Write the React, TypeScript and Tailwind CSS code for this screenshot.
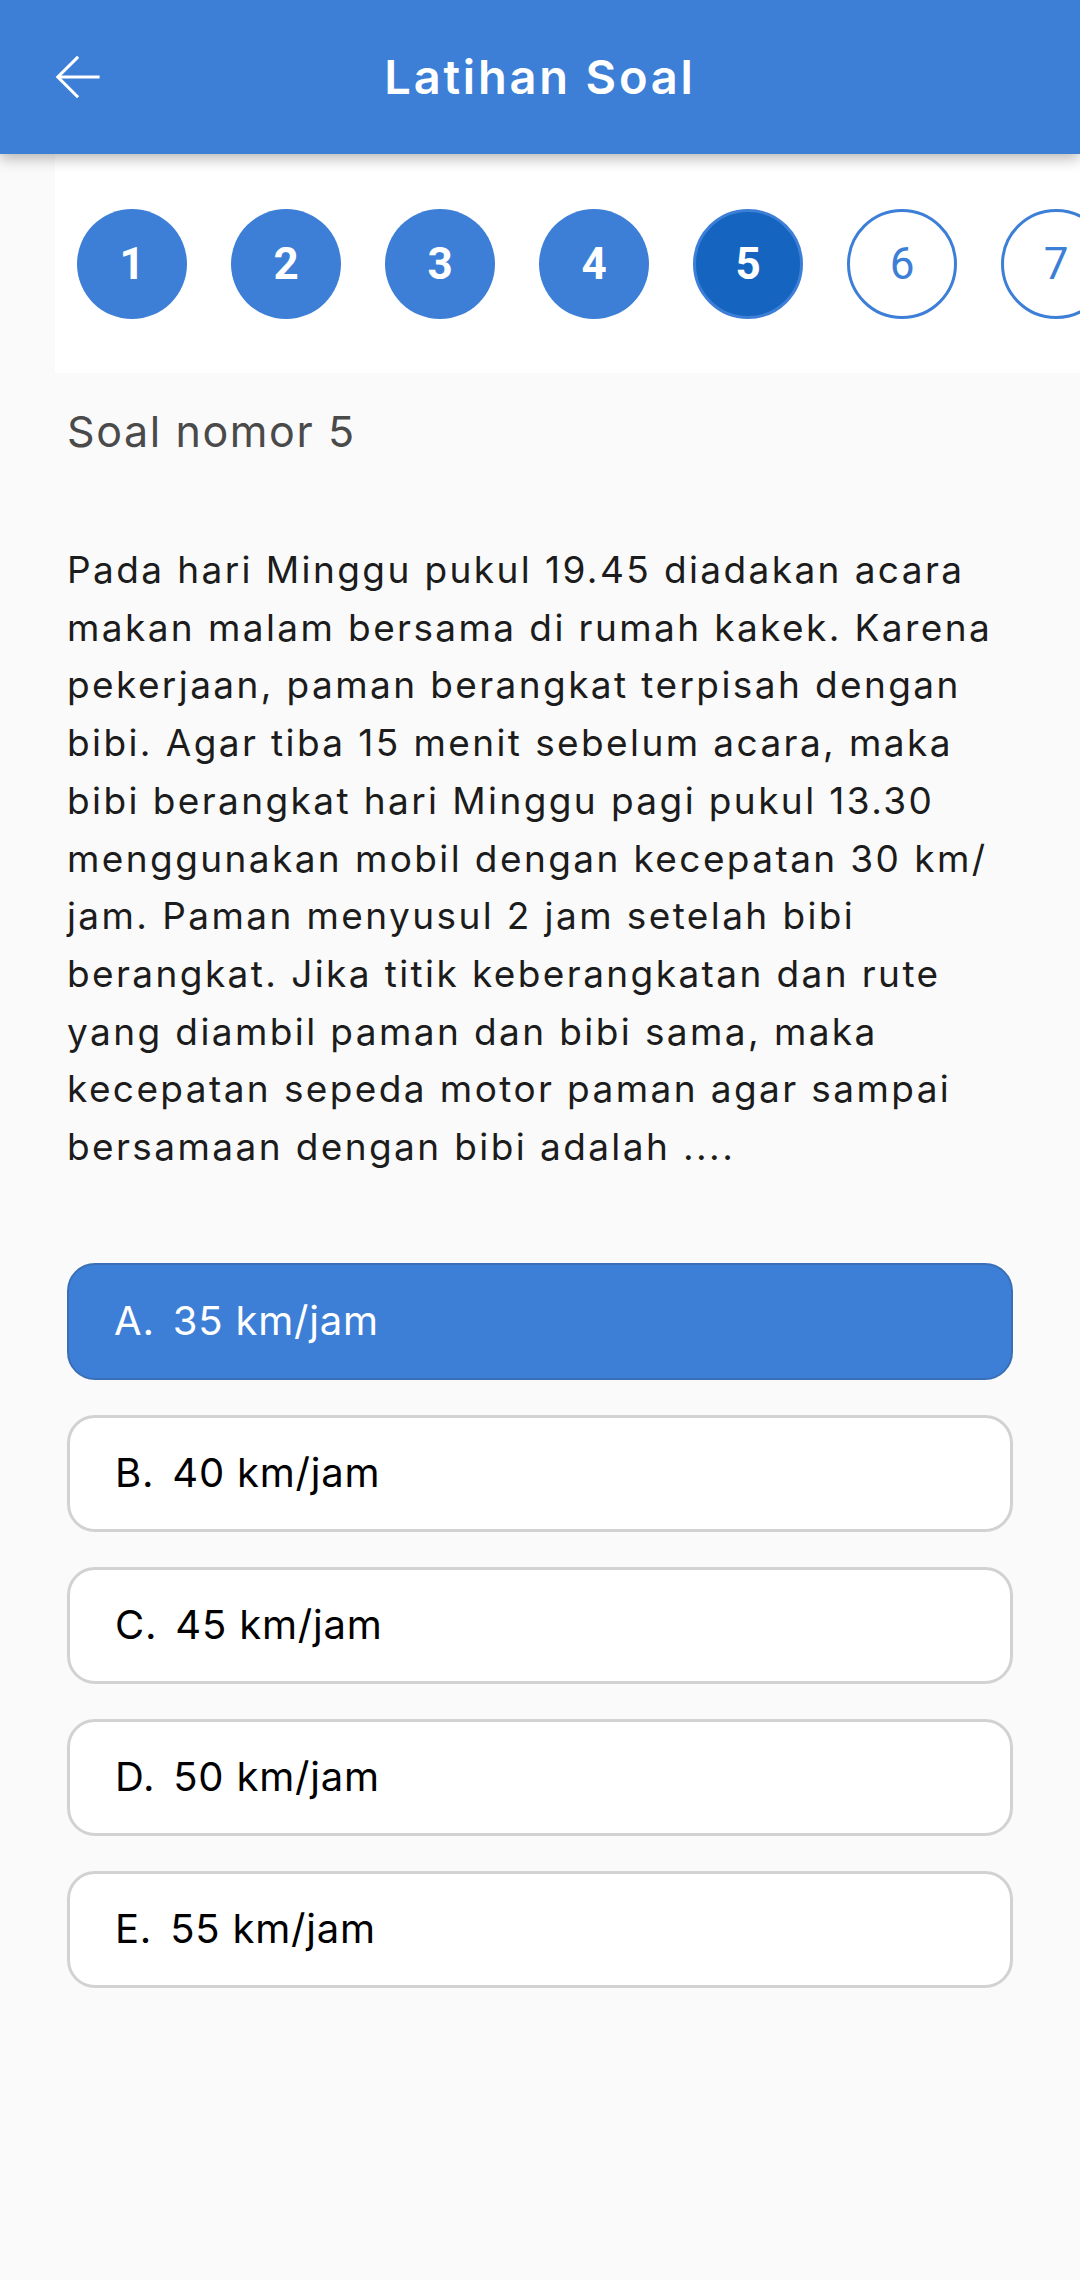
import React from "react";

const lines = [
  "Pada hari Minggu pukul 19.45 diadakan acara",
  "makan malam bersama di rumah kakek. Karena",
  "pekerjaan, paman berangkat terpisah dengan",
  "bibi. Agar tiba 15 menit sebelum acara, maka",
  "bibi berangkat hari Minggu pagi pukul 13.30",
  "menggunakan mobil dengan kecepatan 30 km/",
  "jam. Paman menyusul 2 jam setelah bibi",
  "berangkat. Jika titik keberangkatan dan rute",
  "yang diambil paman dan bibi sama, maka",
  "kecepatan sepeda motor paman agar sampai",
  "bersamaan dengan bibi adalah ....",
];

const options = [
  { l: "A.", t: "35 km/jam", sel: true },
  { l: "B.", t: "40 km/jam" },
  { l: "C.", t: "45 km/jam" },
  { l: "D.", t: "50 km/jam" },
  { l: "E.", t: "55 km/jam" },
];

export default function App() {
  return (
    <div className="w-[1080px] h-[2280px] bg-[#fafafa] overflow-hidden relative" style={{ fontFamily: "Inter, 'Open Sans', sans-serif" }}>
      <div className="relative z-10 h-[154px] bg-[#3d7fd6] flex items-center shadow-[0_4px_14px_rgba(0,0,0,0.3)]">
        <div className="w-[154px] h-[154px] flex items-center justify-center">
          <svg width="46" height="46" viewBox="0 0 48 48" fill="none" stroke="white" strokeWidth="3.2" strokeLinecap="square">
            <path d="M46 24H6" />
            <path d="M24 4L4 24L24 44" strokeLinejoin="miter" />
          </svg>
        </div>
        <div className="absolute left-0 right-0 top-0 h-[154px] flex items-center justify-center pointer-events-none">
          <span className="text-white text-[47px] font-semibold tracking-[2.8px]">Latihan Soal</span>
        </div>
      </div>

      <div className="ml-[55px] bg-white h-[219px] flex items-center pl-[22px] gap-[44px] overflow-hidden" style={{ fontFamily: "Roboto, sans-serif" }}>
        {[1, 2, 3, 4].map((n) => (
          <div key={n} className="shrink-0 w-[110px] h-[110px] rounded-full bg-[#3d7fd6] flex items-center justify-center text-white font-bold text-[44px]">
            {n}
          </div>
        ))}
        <div className="shrink-0 w-[110px] h-[110px] rounded-full bg-[#1565c0] border-[3px] border-[#3d7fd6] flex items-center justify-center text-white font-bold text-[44px]">
          5
        </div>
        {[6, 7].map((n) => (
          <div key={n} className="shrink-0 w-[110px] h-[110px] rounded-full bg-white border-[3px] border-[#3d7fd6] flex items-center justify-center text-[#3d7fd6] text-[44px]">
            {n}
          </div>
        ))}
      </div>

      <div className="px-[67px]">
        <div className="mt-[29px] text-[43px] text-[#4a4a4a] leading-[58px] tracking-[1.6px]">Soal nomor 5</div>
        <div className="mt-[81px] text-[#1c1c1c] text-[37px] leading-[57.7px] tracking-[2.4px]">
          {lines.map((l, i) => (
            <div key={i} className="whitespace-nowrap">{l}</div>
          ))}
        </div>
        <div className="mt-[87px] flex flex-col gap-[35px]">
          {options.map((o) => (
            <div
              key={o.l}
              className={
                o.sel
                  ? "h-[117px] rounded-[28px] bg-[#3d7fd6] border-2 border-[#3a6fb8] flex items-center pl-[45px] text-white text-[40px] tracking-[0.8px]"
                  : "h-[117px] rounded-[28px] bg-white border-[3px] border-[#d2d2d2] flex items-center pl-[45px] text-black text-[40px] tracking-[0.8px]"
              }
            >
              <span>{o.l}</span>
              <span className="ml-[18px]">{o.t}</span>
            </div>
          ))}
        </div>
      </div>
    </div>
  );
}
